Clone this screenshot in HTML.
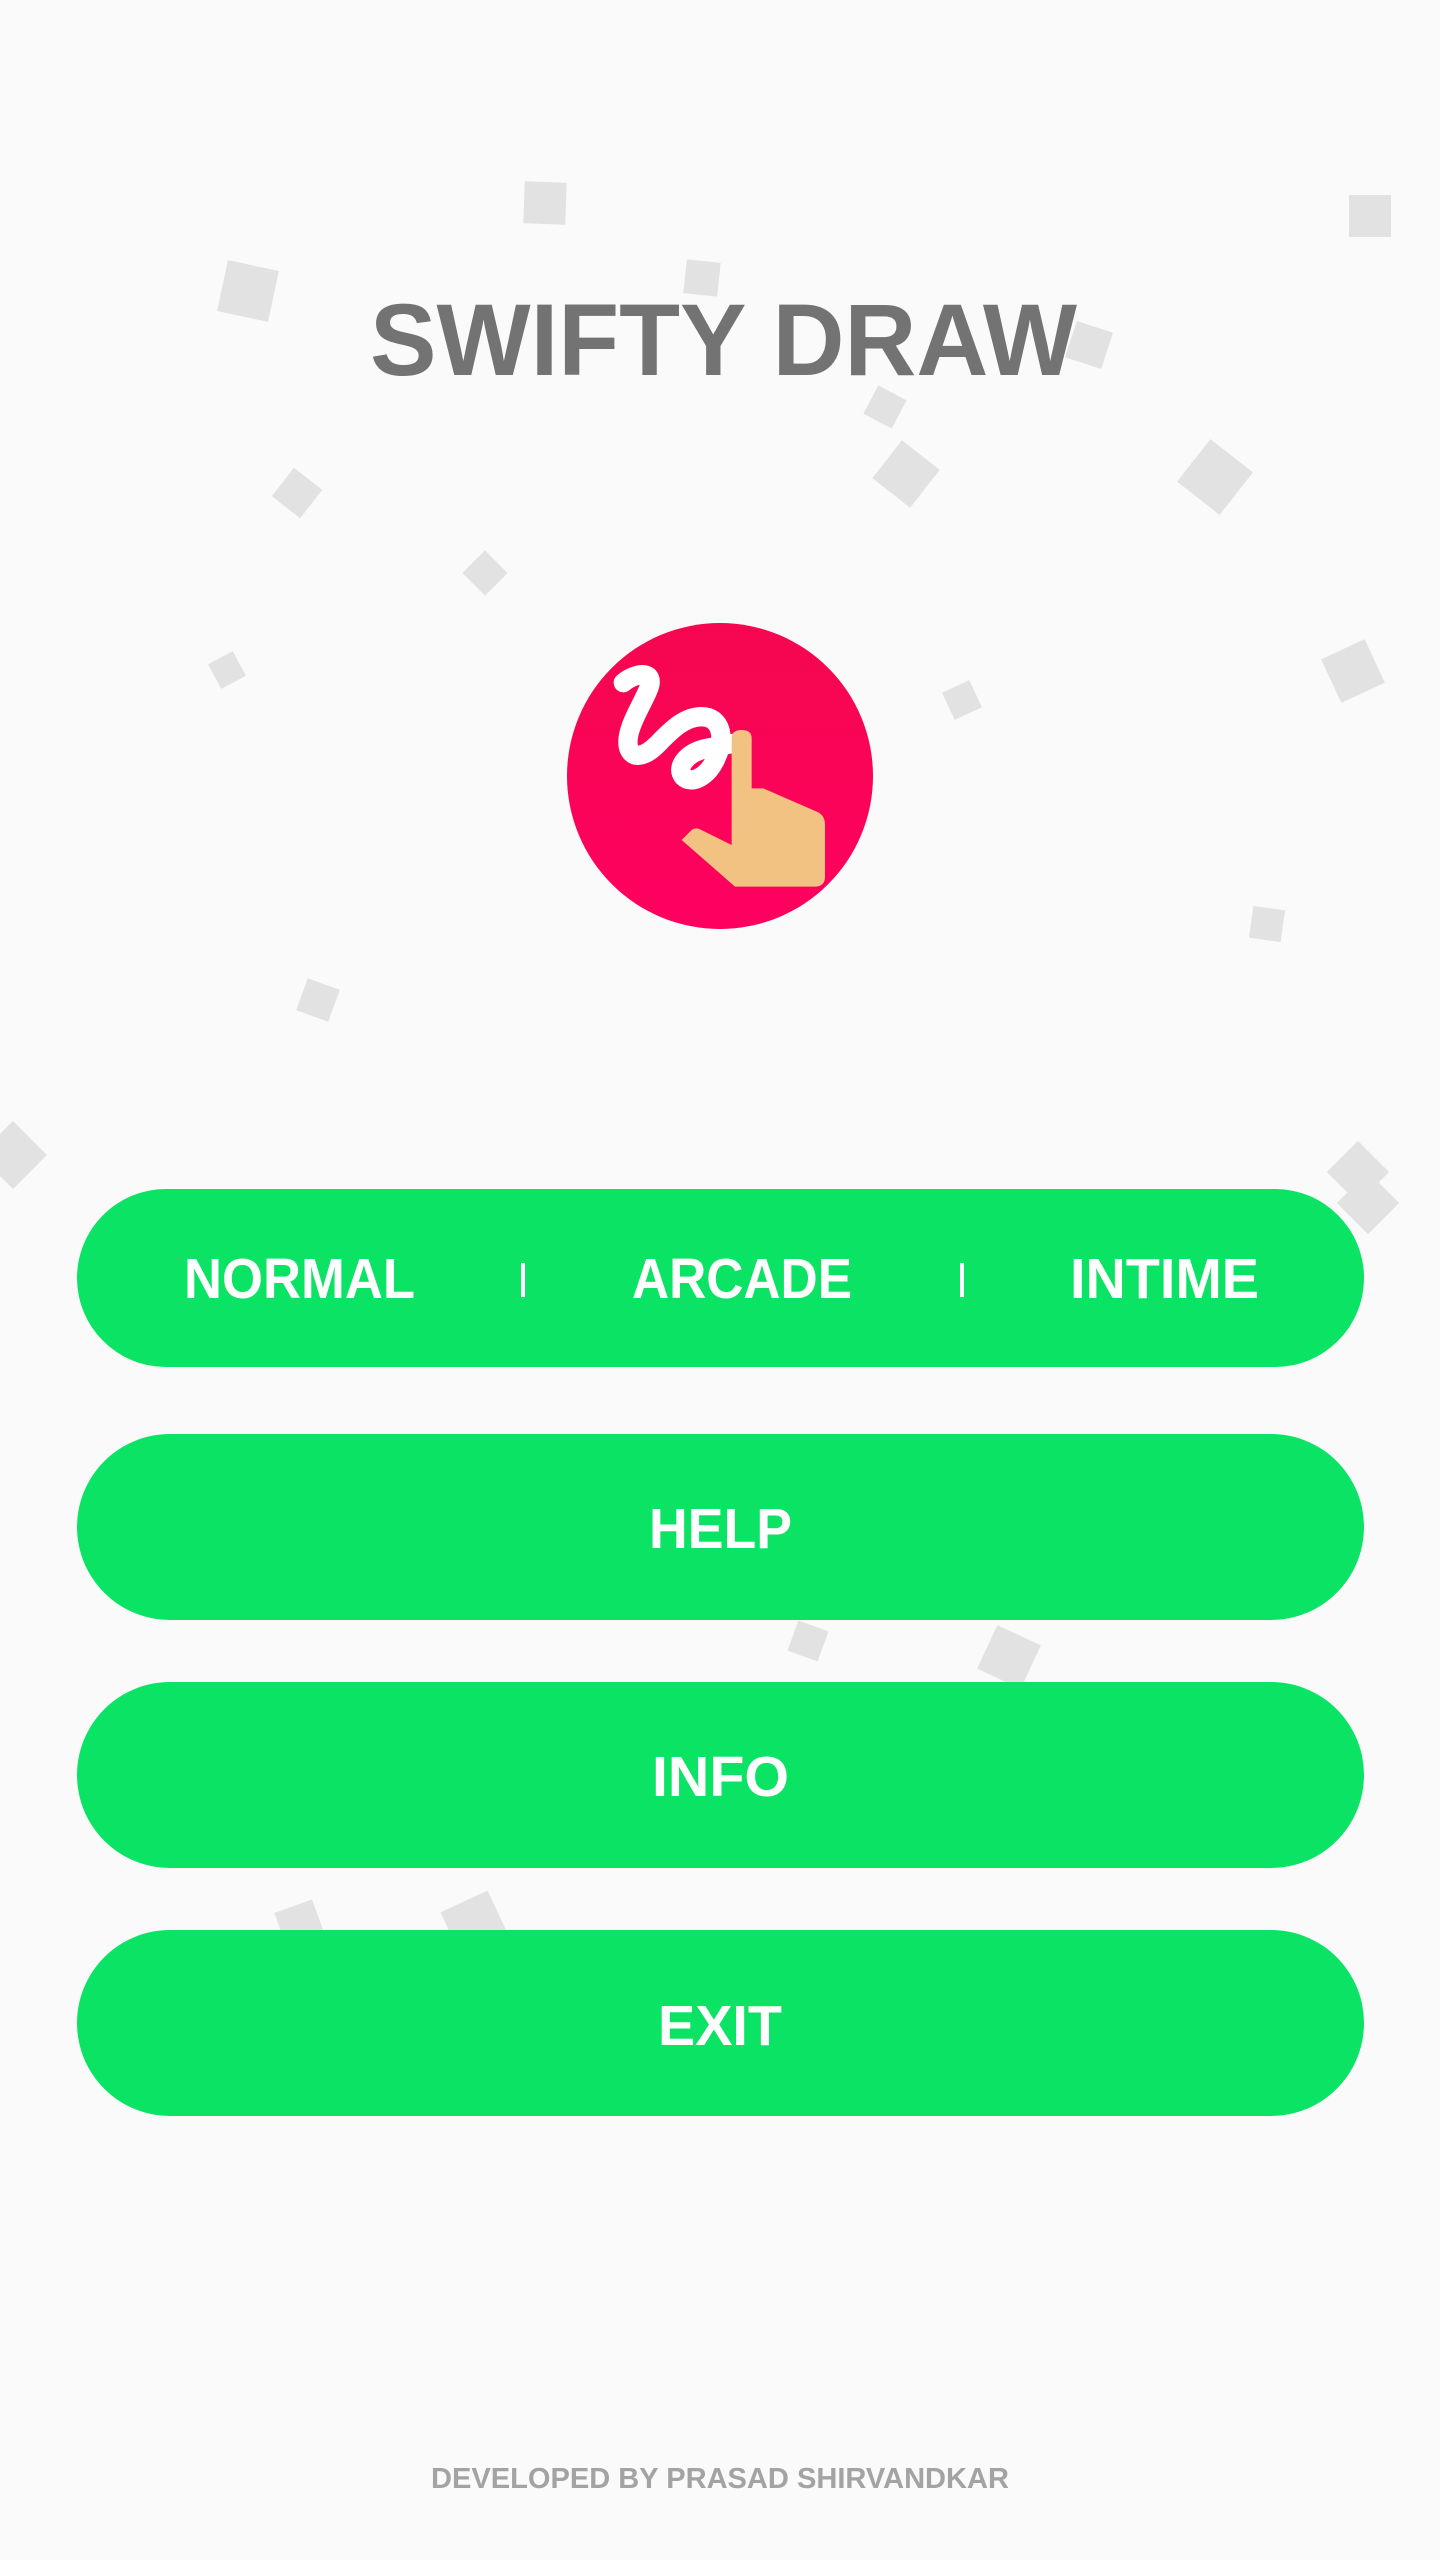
<!DOCTYPE html>
<html><head><meta charset="utf-8"><style>
html,body{margin:0;padding:0;background:#fafafa;}
svg{display:block;}
</style></head><body>
<svg width="1440" height="2560" viewBox="0 0 1440 2560" xmlns="http://www.w3.org/2000/svg">
<rect width="1440" height="2560" fill="#fafafa"/>
<g fill="#e2e2e2">
<rect x="-21" y="-21" width="42" height="42" transform="translate(545,203) rotate(2)"/>
<rect x="-21" y="-21" width="42" height="42" transform="translate(1370,216)"/>
<rect x="-26" y="-26" width="52" height="52" transform="translate(248,291) rotate(12)"/>
<rect x="-17" y="-17" width="34" height="34" transform="translate(702,278) rotate(6)"/>
<rect x="-19" y="-19" width="38" height="38" transform="translate(1089,345) rotate(18)"/>
<rect x="-16" y="-16" width="32" height="32" transform="translate(885,407) rotate(28)"/>
<rect x="-24" y="-24" width="48" height="48" transform="translate(906,474) rotate(38)"/>
<rect x="-27" y="-27" width="54" height="54" transform="translate(1215,477) rotate(38)"/>
<rect x="-18" y="-18" width="36" height="36" transform="translate(297,493) rotate(38)"/>
<rect x="-16" y="-16" width="32" height="32" transform="translate(485,573) rotate(45)"/>
<rect x="-14" y="-14" width="28" height="28" transform="translate(227,670) rotate(-28)"/>
<rect x="-24" y="-24" width="48" height="48" transform="translate(1353,671) rotate(-25)"/>
<rect x="-15" y="-15" width="30" height="30" transform="translate(962,700) rotate(-25)"/>
<rect x="-16" y="-16" width="32" height="32" transform="translate(1267,924) rotate(8)"/>
<rect x="-17" y="-17" width="34" height="34" transform="translate(318,1000) rotate(20)"/>
<rect x="-24" y="-24" width="48" height="48" transform="translate(13,1155) rotate(45)"/>
<rect x="-22" y="-22" width="44" height="44" transform="translate(1358,1172) rotate(45)"/>
<rect x="-22" y="-22" width="44" height="44" transform="translate(1368,1203) rotate(45)"/>
<rect x="-16" y="-16" width="32" height="32" transform="translate(808,1641) rotate(20)"/>
<rect x="-24" y="-24" width="48" height="48" transform="translate(1009,1657) rotate(25)"/>
<rect x="-20" y="-20" width="40" height="40" transform="translate(300,1925) rotate(-20)"/>
<rect x="-26" y="-26" width="52" height="52" transform="translate(475,1925) rotate(-25)"/>
</g>
<text x="370" y="375" textLength="707" lengthAdjust="spacingAndGlyphs" font-family="Liberation Sans, sans-serif" font-weight="bold" font-size="102" fill="#737373">SWIFTY DRAW</text>
<defs><linearGradient id="g" x1="0" y1="0" x2="0" y2="1"><stop offset="0" stop-color="#f5074f"/><stop offset="1" stop-color="#ff0060"/></linearGradient></defs>
<circle cx="720" cy="776" r="153" fill="url(#g)"/>
<g transform="translate(560,610) scale(0.33333)">
<path d="M190,218 C225,188 290,178 265,238 C245,288 195,360 205,410 C215,450 255,440 290,405 C330,365 370,320 425,320 C485,320 495,385 470,440 C445,500 395,525 370,500 C345,470 385,425 440,415 L520,400" fill="none" stroke="#fff" stroke-width="58" stroke-linecap="round" stroke-linejoin="round"/>
<path d="M515,705 L515,385 Q515,360 545,360 Q575,360 575,385 L575,535 L610,535 L770,605 Q795,615 795,645 L795,800 Q795,830 765,830 L525,830 L365,690 L395,660 Q405,652 418,657 Z" fill="#f2c282"/>
</g>
<g fill="#0be364">
<rect x="77" y="1189" width="1287" height="178" rx="89"/>
<rect x="77" y="1434" width="1287" height="186" rx="93"/>
<rect x="77" y="1682" width="1287" height="186" rx="93"/>
<rect x="77" y="1930" width="1287" height="186" rx="93"/>
</g>
<g font-family="Liberation Sans, sans-serif" font-weight="bold" font-size="57" fill="#fff">
<text x="184" y="1298" textLength="231" lengthAdjust="spacingAndGlyphs">NORMAL</text>
<text x="632" y="1298" textLength="220" lengthAdjust="spacingAndGlyphs">ARCADE</text>
<text x="1070" y="1298" textLength="189" lengthAdjust="spacingAndGlyphs">INTIME</text>
<text x="649" y="1548" textLength="143" lengthAdjust="spacingAndGlyphs">HELP</text>
<text x="652" y="1796" textLength="137" lengthAdjust="spacingAndGlyphs">INFO</text>
<text x="658" y="2045" textLength="124" lengthAdjust="spacingAndGlyphs">EXIT</text>
</g>
<rect x="521" y="1263" width="4" height="34" fill="#fff"/>
<rect x="960" y="1263" width="4" height="34" fill="#fff"/>
<text x="431" y="2488" textLength="578" lengthAdjust="spacingAndGlyphs" font-family="Liberation Sans, sans-serif" font-weight="bold" font-size="29" fill="#a3a3a3">DEVELOPED BY PRASAD SHIRVANDKAR</text>
</svg>
</body></html>
